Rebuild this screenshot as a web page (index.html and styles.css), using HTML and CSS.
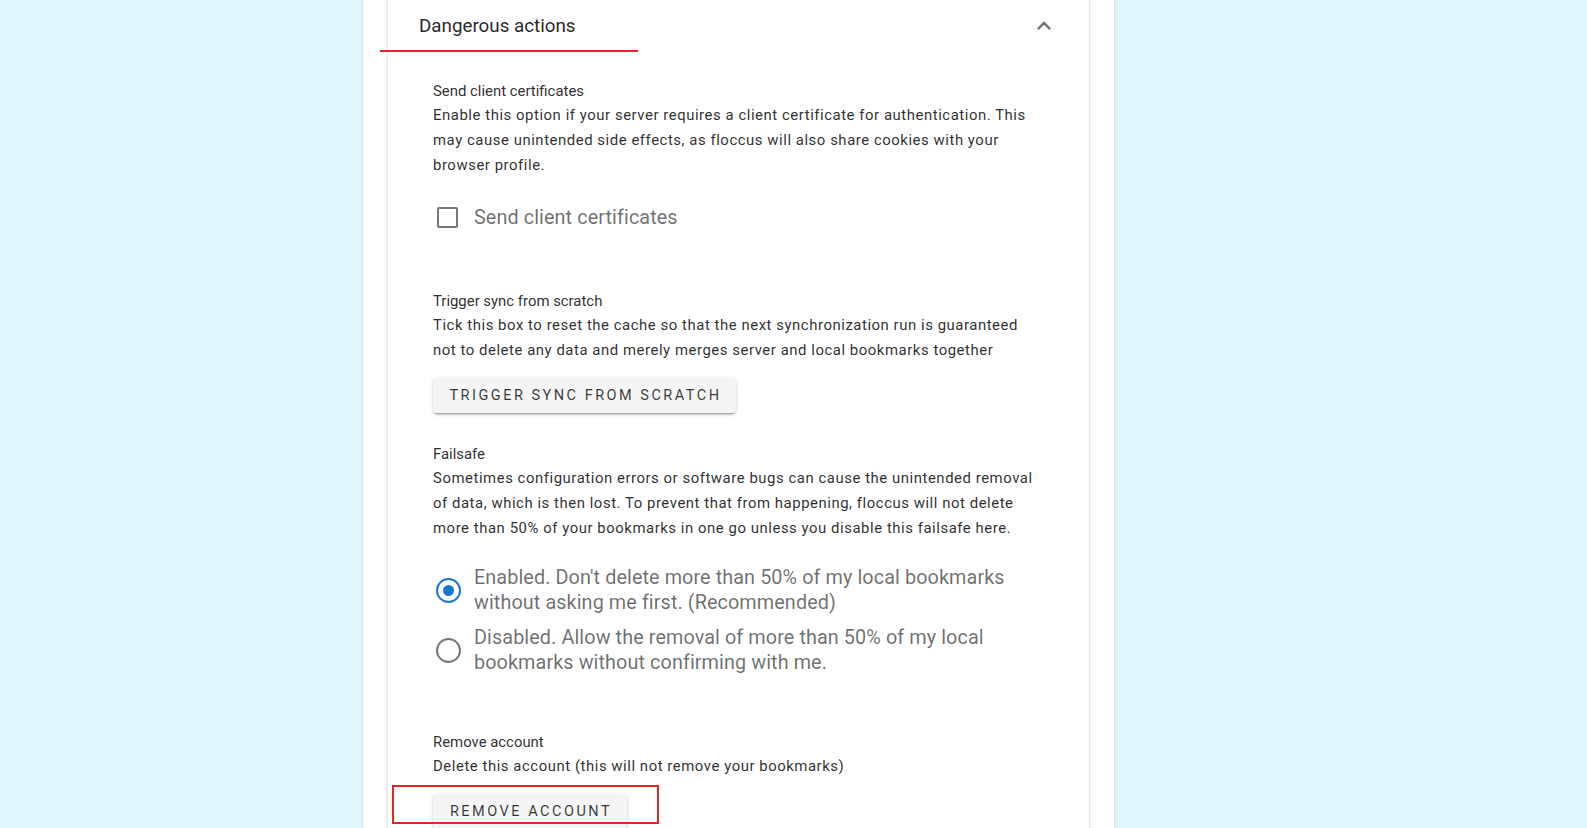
FILE: index.html
```html
<!DOCTYPE html>
<html>
<head>
  <meta charset="utf-8">
  <link rel="stylesheet" href="styles.css">
</head>
<body>

<div class="sheet">
  <div class="panel">
    <div class="panel-header">
      <span class="panel-title">Dangerous actions</span>
      <svg class="chevron" viewBox="0 0 24 24"><path d="M7.41,15.41L12,10.83L16.59,15.41L18,14L12,8L6,14L7.41,15.41Z"/></svg>
      <div class="mark-line"></div>
    </div>

    <div class="panel-content">

      <div class="setting setting-certs">
        <div class="setting-title">Send client certificates</div>
        <div class="setting-desc">Enable this option if your server requires a client certificate for authentication. This may cause unintended side effects, as floccus will also share cookies with your browser profile.</div>
        <label class="check-row">
          <span class="checkbox"></span>
          <span class="control-label">Send client certificates</span>
        </label>
      </div>

      <div class="setting setting-scratch">
        <div class="setting-title">Trigger sync from scratch</div>
        <div class="setting-desc">Tick this box to reset the cache so that the next synchronization run is guaranteed not to delete any data and merely merges server and local bookmarks together</div>
        <button class="btn btn-scratch">Trigger sync from scratch</button>
      </div>

      <div class="setting setting-failsafe">
        <div class="setting-title">Failsafe</div>
        <div class="setting-desc">Sometimes configuration errors or software bugs can cause the unintended removal of data, which is then lost. To prevent that from happening, floccus will not delete more than 50% of your bookmarks in one go unless you disable this failsafe here.</div>
        <div class="radio-group">
          <label class="radio-row">
            <span class="radio checked"></span>
            <span class="control-label">Enabled. Don't delete more than 50% of my local bookmarks without asking me first. (Recommended)</span>
          </label>
          <label class="radio-row">
            <span class="radio"></span>
            <span class="control-label">Disabled. Allow the removal of more than 50% of my local bookmarks without confirming with me.</span>
          </label>
        </div>
      </div>

      <div class="setting setting-remove">
        <div class="setting-title">Remove account</div>
        <div class="setting-desc">Delete this account (this will not remove your bookmarks)</div>
        <div class="remove-wrap">
          <button class="btn btn-remove">Remove account</button>
          <div class="mark-box"></div>
        </div>
      </div>

    </div>
  </div>
</div>

</body>
</html>
```

FILE: styles.css
```css
* {
  box-sizing: border-box;
}

html, body {
  height: 100%;
}

body {
  margin: 0;
  background: #e1f5fe;
  font-family: Roboto, "Liberation Sans", sans-serif;
  color: rgba(0, 0, 0, 0.87);
  overflow: hidden;
}

.sheet {
  width: 751px;
  min-height: 100%;
  margin-left: 363px;
  padding: 0 25px;
  background: #fff;
  box-shadow: 0 0 2px rgba(0, 0, 0, 0.18);
}

.panel {
  background: #fff;
  margin-top: -30px;
  padding-bottom: 40px;
  box-shadow: 0 3px 1px -2px rgba(0, 0, 0, 0.2), 0 2px 2px 0 rgba(0, 0, 0, 0.14), 0 1px 5px 0 rgba(0, 0, 0, 0.12);
}

/* header */
.panel-header {
  position: relative;
  display: flex;
  align-items: center;
  justify-content: space-between;
  height: 80px;
  padding: 32px 31px 0 31px;
}

.panel-title {
  font-size: 18.8px;
  color: rgba(0, 0, 0, 0.87);
}

.chevron {
  width: 28px;
  height: 28px;
  fill: rgba(0, 0, 0, 0.54);
}

.mark-line {
  position: absolute;
  left: -8px;
  top: 80px;
  width: 258px;
  height: 2px;
  background: #e3242b;
}

/* content */
.panel-content {
  padding: 0 52px 0 45px;
}

.setting-title {
  font-size: 14.9px;
  line-height: 24px;
  color: rgba(0, 0, 0, 0.84);
}

.setting-desc {
  font-size: 14.9px;
  line-height: 25px;
  letter-spacing: 0.55px;
  color: rgba(0, 0, 0, 0.84);
}

.setting-certs {
  padding-top: 29px;
}

.setting-scratch {
  margin-top: 52px;
}

.setting-failsafe {
  margin-top: 29px;
}

.setting-remove {
  margin-top: 55px;
}

.control-label {
  font-size: 19.8px;
  line-height: 25px;
  letter-spacing: 0.1px;
  color: rgba(0, 0, 0, 0.58);
}

/* checkbox */
.check-row {
  display: flex;
  align-items: center;
  height: 40px;
  margin-top: 19px;
  gap: 16px;
}

.checkbox {
  width: 21px;
  height: 21px;
  margin-left: 4px;
  border: 2.5px solid #757575;
  border-radius: 2px;
}

/* radios */
.radio-group {
  margin-top: 24px;
  display: flex;
  flex-direction: column;
  gap: 10px;
}

.radio-row {
  display: flex;
  align-items: center;
  gap: 13px;
}

.radio {
  flex: none;
  width: 25px;
  height: 25px;
  margin-left: 3px;
  border: 2.4px solid #757575;
  border-radius: 50%;
  display: flex;
  align-items: center;
  justify-content: center;
}

.radio.checked {
  border-color: #1976d2;
}

.radio.checked::after {
  content: "";
  width: 11px;
  height: 11px;
  border-radius: 50%;
  background: #1976d2;
}

/* buttons */
.btn {
  display: block;
  height: 35px;
  padding: 0;
  border: none;
  border-radius: 4px;
  background: #f5f5f5;
  font-family: Roboto, "Liberation Sans", sans-serif;
  font-size: 14.5px;
  letter-spacing: 2.5px;
  text-indent: 2px;
  text-transform: uppercase;
  color: rgba(0, 0, 0, 0.78);
  box-shadow: 0 3px 1px -2px rgba(0, 0, 0, 0.2), 0 2px 2px 0 rgba(0, 0, 0, 0.14), 0 1px 5px 0 rgba(0, 0, 0, 0.12);
  cursor: pointer;
}

.btn-scratch {
  margin-top: 15px;
  width: 303px;
}

.remove-wrap {
  position: relative;
  padding-top: 15px;
}

.btn-remove {
  width: 194px;
}

.mark-box {
  position: absolute;
  left: -41px;
  top: 6px;
  width: 267px;
  height: 39px;
  border: 2px solid #e3242b;
}
```
